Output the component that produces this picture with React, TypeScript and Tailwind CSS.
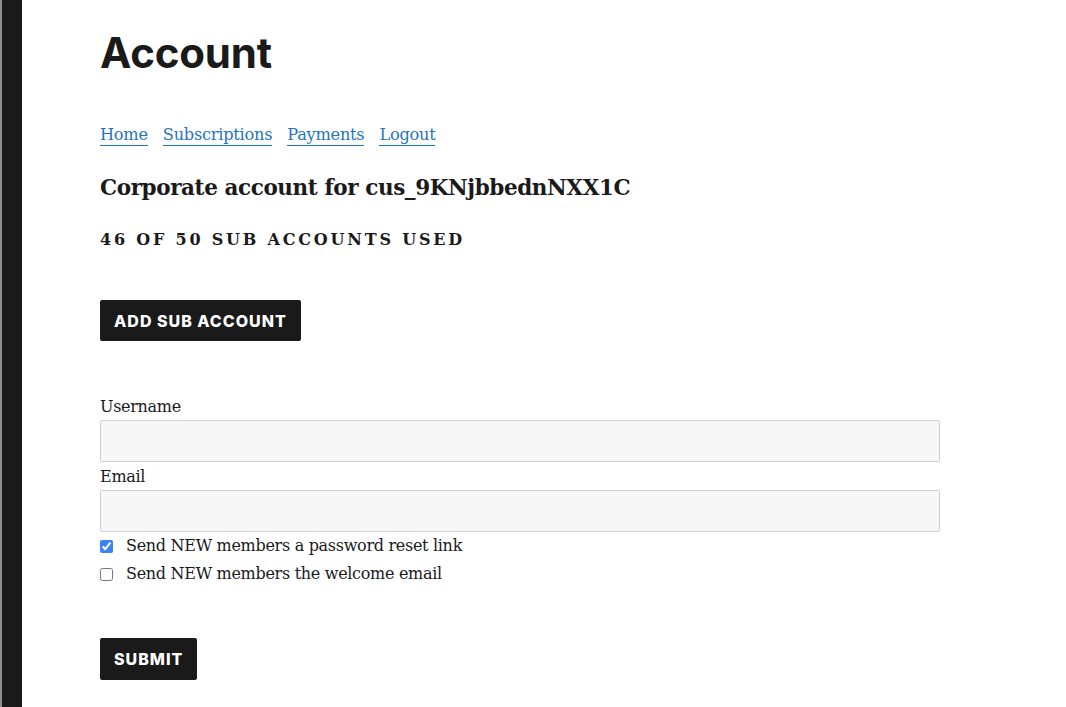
export default function App() {
  const serif = "font-['DejaVu_Serif',serif]";
  const sans = "font-['Inter',sans-serif]";

  return (
    <div className="min-h-[707px] w-full bg-white flex">
      {/* dark side bar */}
      <div className="w-[22px] shrink-0 bg-[#1a1a1a] border-l-2 border-[#8f8f8f]" />

      <main className="flex-1 pl-[78px] pt-[30px] pb-[27px]">
        <h1 className={`${sans} text-[42px] leading-[46px] font-bold text-[#1a1a1a] tracking-[-0.2px]`}>
          Account
        </h1>

        <nav className={`${serif} mt-[49px] flex gap-[15px] text-[16.2px] leading-[20px]`}>
          {["Home", "Subscriptions", "Payments", "Logout"].map((l) => (
            <a key={l} href="#" className="text-[#1f74c4] border-b border-[#1f74c4] tracking-[-0.25px]">
              {l}
            </a>
          ))}
        </nav>

        <h2 className={`${serif} mt-[28px] text-[21.5px] leading-[28px] font-bold text-[#1a1a1a] tracking-[-0.4px]`}>
          Corporate account for cus_9KNjbbednNXX1C
        </h2>

        <h3 className={`${serif} mt-[27px] text-[16px] leading-[22px] font-bold uppercase tracking-[2.8px] text-[#1a1a1a]`}>
          46 of 50 sub accounts used
        </h3>

        <button className={`${sans} mt-[49px] h-[41px] px-[14px] rounded-[2px] bg-[#1a1a1a] text-white text-[16px] font-extrabold tracking-[1px]`}>
          ADD SUB ACCOUNT
        </button>

        <form className={`${serif} mt-[55px] w-[840px] text-[#1a1a1a]`}>
          <label className="block text-[16px] leading-[22px] tracking-[-0.3px]">Username</label>
          <input className="mt-[2px] block w-full h-[42px] bg-[#f7f7f7] border border-[#d1d1d1] rounded-[2px]" />
          <label className="block mt-[4px] text-[16px] leading-[22px] tracking-[-0.3px]">Email</label>
          <input className="mt-[2px] block w-full h-[42px] bg-[#f7f7f7] border border-[#d1d1d1] rounded-[2px]" />

          <label className="flex items-center gap-[13px] text-[16px] leading-[28px] tracking-[-0.3px]">
            <input type="checkbox" defaultChecked className="w-[13px] h-[13px] accent-[#3b82f6]" />
            Send NEW members a password reset link
          </label>
          <label className="flex items-center gap-[13px] text-[16px] leading-[28px] tracking-[-0.3px]">
            <input type="checkbox" className="w-[13px] h-[13px]" />
            Send NEW members the welcome email
          </label>

          <button
            type="button"
            className={`${sans} mt-[50px] h-[42px] px-[14px] rounded-[2px] bg-[#1a1a1a] text-white text-[16px] font-extrabold tracking-[1px]`}
          >
            SUBMIT
          </button>
        </form>
      </main>
    </div>
  );
}
